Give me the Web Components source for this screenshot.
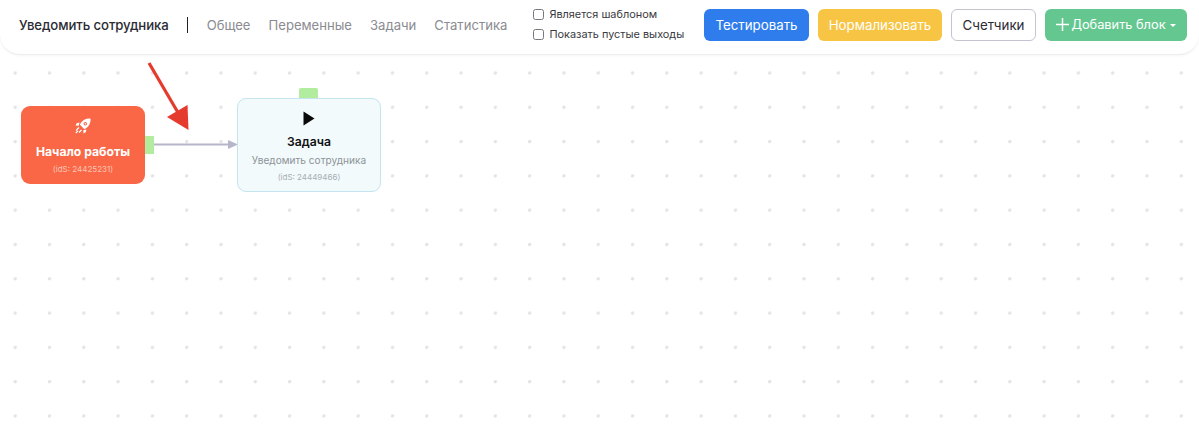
<!DOCTYPE html>
<html lang="ru">
<head>
<meta charset="utf-8">
<title>Уведомить сотрудника</title>
<style>
  html,body{ margin:0; height:100%; background:#fff; overflow:hidden; }
  body{ font-family:Inter,"Noto Sans",sans-serif; }
</style>
</head>
<body>
<flow-page>
  <flow-header slot="header" title-text="Уведомить сотрудника">
    <flow-tab>Общее</flow-tab>
    <flow-tab>Переменные</flow-tab>
    <flow-tab>Задачи</flow-tab>
    <flow-tab>Статистика</flow-tab>
    <flow-check slot="checks">Является шаблоном</flow-check>
    <flow-check slot="checks">Показать пустые выходы</flow-check>
    <flow-button slot="actions" kind="blue" style="width:105px">Тестировать</flow-button>
    <flow-button slot="actions" kind="yellow" style="width:124px">Нормализовать</flow-button>
    <flow-button slot="actions" kind="ghost" style="width:85px">Счетчики</flow-button>
    <flow-button slot="actions" kind="green" style="width:142px"><svg width="13" height="13" viewBox="0 0 13 13" style="margin-right:2px"><path d="M6.500 0V13M0 6.500H13" stroke="#fff" stroke-width="1.500"/></svg><span style="font-size:12.800px">Добавить блок</span><span style="display:inline-block;margin-left:4px;margin-top:1px;border:3px solid transparent;border-top:3.500px solid #fff;border-bottom:0"></span></flow-button>
  </flow-header>
  <flow-node kind="start" ids="24425231" style="left:21px;top:106px;width:124px;height:78px">Начало работы</flow-node>
  <flow-node kind="task" ids="24449466" sub="Уведомить сотрудника" style="left:237px;top:98px;width:144px;height:94px">Задача</flow-node>
</flow-page>

<script>
(() => {
  'use strict';

  class FlowPage extends HTMLElement {
    constructor() {
      super();
      this.attachShadow({ mode: 'open' }).innerHTML = `
        <style>
          :host{ display:block; position:relative; width:100%; height:100vh; overflow:hidden; background:#fff; }
          .grid{
            position:absolute; inset:0;
            background:radial-gradient(circle at 1.7px 1.7px,#e4e4e4 1.5px,transparent 1.9px);
            background-size:34.3px 34.3px;
            background-position:13.6px 2.8px;
          }
          svg{ position:absolute; left:0; top:0; width:100%; height:100%; pointer-events:none; }
          header{ position:relative; z-index:2; display:block; }
        </style>
        <div class="grid"></div>
        <svg viewBox="0 0 1199 430">
          <!-- связь между блоками -->
          <path d="M154 144.500H229" stroke="#b5b6ca" stroke-width="2" fill="none"/>
          <path d="M228 140l10 4.500-10 4.500z" fill="#b5b6ca"/>
        </svg>
        <slot></slot>
        <svg viewBox="0 0 1199 430" style="z-index:3">
          <!-- красная стрелка-пометка -->
          <path d="M149 63L180 116" stroke="#e53a2e" stroke-width="3.200" fill="none"/>
          <path d="M167 117L188.500 130 187.500 105z" fill="#e53a2e"/>
        </svg>
        <header><slot name="header"></slot></header>`;
    }
  }

  class FlowHeader extends HTMLElement {
    constructor() {
      super();
      const title = this.getAttribute('title-text') || '';
      this.attachShadow({ mode: 'open' }).innerHTML = `
        <style>
          :host{
            display:flex; align-items:center; box-sizing:border-box; height:55px;
            padding:0 12px 5px 19px; background:#fff;
            border-bottom:1px solid #ededed; border-radius:0 0 20px 20px;
            box-shadow:0 1px 3px rgba(0,0,0,.04);
          }
          .title{ flex:none; font-size:13.200px; font-weight:500; color:#2b2b33; white-space:nowrap; letter-spacing:-.1px; }
          .sep{ flex:none; width:1px; height:16px; background:#222; margin:0 19px 0 18px; }
          .tabs{ flex:none; display:flex; gap:18px; }
          .checks{ flex:none; display:flex; flex-direction:column; gap:6.500px; margin-left:26px; }
          .actions{ flex:none; display:flex; gap:9px; margin-left:auto; }
        </style>
        <div class="title">${title}</div>
        <div class="sep"></div>
        <div class="tabs"><slot></slot></div>
        <div class="checks"><slot name="checks"></slot></div>
        <div class="actions"><slot name="actions"></slot></div>`;
    }
  }

  class FlowTab extends HTMLElement {
    constructor() {
      super();
      this.attachShadow({ mode: 'open' }).innerHTML = `
        <style>:host{ display:block; font-size:13.100px; color:#8b8b92; white-space:nowrap; }</style>
        <slot></slot>`;
    }
  }

  class FlowCheck extends HTMLElement {
    constructor() {
      super();
      this.attachShadow({ mode: 'open' }).innerHTML = `
        <style>
          :host{ display:flex; align-items:center; gap:5px; font-size:10.900px; line-height:13px; color:#3a3a42; white-space:nowrap; }
          i{ display:block; width:9px; height:9px; border:1.200px solid #77777d; border-radius:2.500px; background:#fff; }
        </style>
        <i></i><slot></slot>`;
    }
  }

  class FlowButton extends HTMLElement {
    constructor() {
      super();
      this.attachShadow({ mode: 'open' }).innerHTML = `
        <style>
          :host{
            display:flex; align-items:center; justify-content:center; box-sizing:border-box;
            height:32px; border-radius:6px; font-size:13.300px; color:#fff; white-space:nowrap;
          }
          :host([kind=blue]){ background:#2f7ded; }
          :host([kind=yellow]){ background:#f7c444; }
          :host([kind=ghost]){ background:#fff; color:#2b2b33; border:1px solid #c4c4d0; }
          :host([kind=green]){ background:#65c790; }
        </style>
        <slot></slot>`;
    }
  }

  class FlowNode extends HTMLElement {
    constructor() {
      super();
      const kind = this.getAttribute('kind');
      const sub = this.getAttribute('sub');
      const ids = this.getAttribute('ids');
      const rocket = `
        <svg width="20" height="20" viewBox="0 0 20 20" fill="#fff">
          <path d="M17.500 2.500c-4-.4-7 1-9.200 3.800L6.800 8.600l4.600 4.600 2.300-1.500c2.800-2.200 4.200-5.200 3.800-9.200z"/>
          <circle cx="12.300" cy="7.700" r="1.800" fill="#f96746"/>
          <circle cx="12.300" cy="7.700" r=".8"/>
          <path d="M6.500 6.500L3.700 7.300 2.500 9.500l3.300.2zM13.500 13.500l-.8 2.800-2.200 1.200-.2-3.300z"/>
          <path d="M6 11.500L3 14.500M8.500 14L6 16.500M5 14.800L2.800 17" stroke="#fff" stroke-width="1.200" fill="none"/>
        </svg>`;
      const play = `<svg width="14" height="15" viewBox="0 0 14 15"><path d="M1.500 .5L12.500 7.500 1.500 14.500z" fill="#0a0a0a"/></svg>`;
      this.attachShadow({ mode: 'open' }).innerHTML = `
        <style>
          :host{
            position:absolute; display:flex; flex-direction:column; align-items:center;
            box-sizing:border-box; border-radius:9px; text-align:center; white-space:nowrap;
          }
          :host([kind=start]){ background:#f96746; color:#fff; padding-top:10px; }
          :host([kind=task]){ background:#f2fafc; border:1px solid #c4e4f0; color:#111; padding-top:9px; }
          .icon{ height:20px; display:flex; align-items:center; justify-content:center; }
          .name{ font-size:12.200px; font-weight:700; line-height:16px; margin-top:8px; }
          :host([kind=task]) .name{ font-weight:600; margin-top:6px; }
          .sub{ font-size:10.100px; line-height:13px; color:#8d9398; margin-top:4px; }
          .ids{ font-size:8px; line-height:11px; margin-top:5px; color:#a9aeb3; }
          :host([kind=start]) .ids{ color:#fdc3b4; margin-top:4px; }
          .port{ position:absolute; background:#b2ec9e; }
          :host([kind=start]) .port{ left:100%; top:30px; width:9px; height:18px; }
          :host([kind=task]) .port{ left:61px; top:-11px; width:19px; height:10px; border-radius:2px 2px 0 0; }
        </style>
        <div class="port"></div>
        <div class="icon">${kind === 'start' ? rocket : play}</div>
        <div class="name"><slot></slot></div>
        ${sub ? `<div class="sub">${sub}</div>` : ''}
        <div class="ids">(idS: ${ids})</div>`;
    }
  }

  customElements.define('flow-page', FlowPage);
  customElements.define('flow-header', FlowHeader);
  customElements.define('flow-tab', FlowTab);
  customElements.define('flow-check', FlowCheck);
  customElements.define('flow-button', FlowButton);
  customElements.define('flow-node', FlowNode);
})();
</script>
</body>
</html>
